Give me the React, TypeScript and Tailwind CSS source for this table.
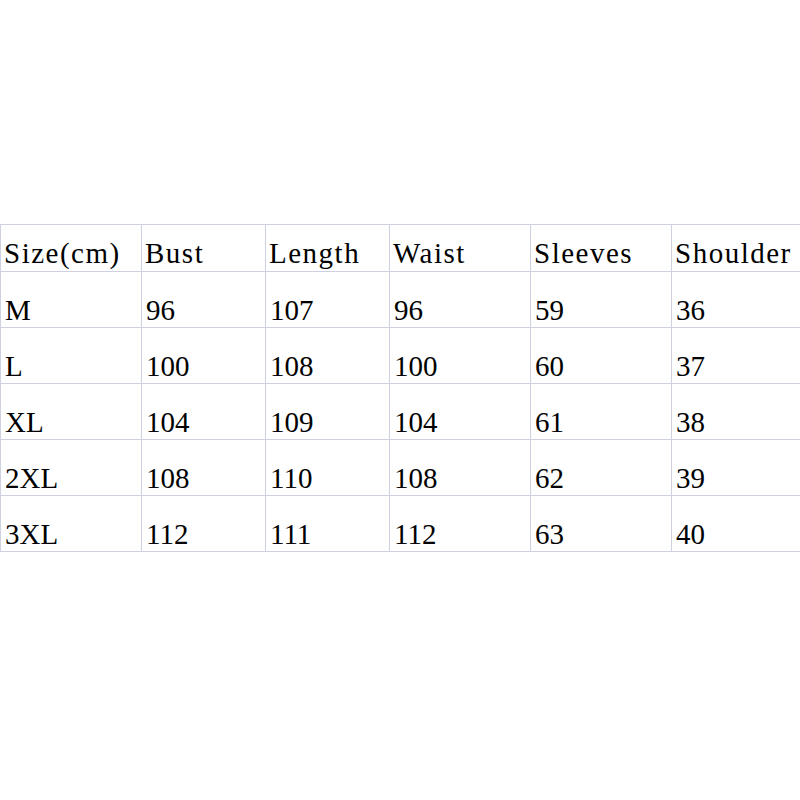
const header = ['Size(cm)', 'Bust', 'Length', 'Waist', 'Sleeves', 'Shoulder'];

const rows = [
  ['M', '96', '107', '96', '59', '36'],
  ['L', '100', '108', '100', '60', '37'],
  ['XL', '104', '109', '104', '61', '38'],
  ['2XL', '108', '110', '108', '62', '39'],
  ['3XL', '112', '111', '112', '63', '40'],
];

const widths = ['w-[141px]', 'w-[124px]', 'w-[124px]', 'w-[141px]', 'w-[141px]', 'w-[129px]'];

export default function App() {
  return (
    <div className="h-[800px] w-[800px] bg-white pt-[224px] overflow-hidden">
      <table
        className="border-collapse table-fixed w-[800px] text-[29px] text-black"
        style={{ fontFamily: '"Liberation Serif", "Times New Roman", serif' }}
      >
        <thead>
          <tr className="h-[47px]">
            {header.map((h, i) => (
              <th
                key={h}
                className={`${widths[i]} border border-[#cdd1e2] pl-[3px] pr-0 pb-[3px] align-bottom text-left font-normal leading-none tracking-[1.5px]`}
              >
                {h}
              </th>
            ))}
          </tr>
        </thead>
        <tbody>
          {rows.map((r) => (
            <tr key={r[0]} className="h-[56px]">
              {r.map((c, i) => (
                <td
                  key={i}
                  className="border border-[#cdd1e2] pl-[4px] pr-0 pb-[2px] align-bottom leading-none"
                >
                  {c}
                </td>
              ))}
            </tr>
          ))}
        </tbody>
      </table>
    </div>
  );
}
